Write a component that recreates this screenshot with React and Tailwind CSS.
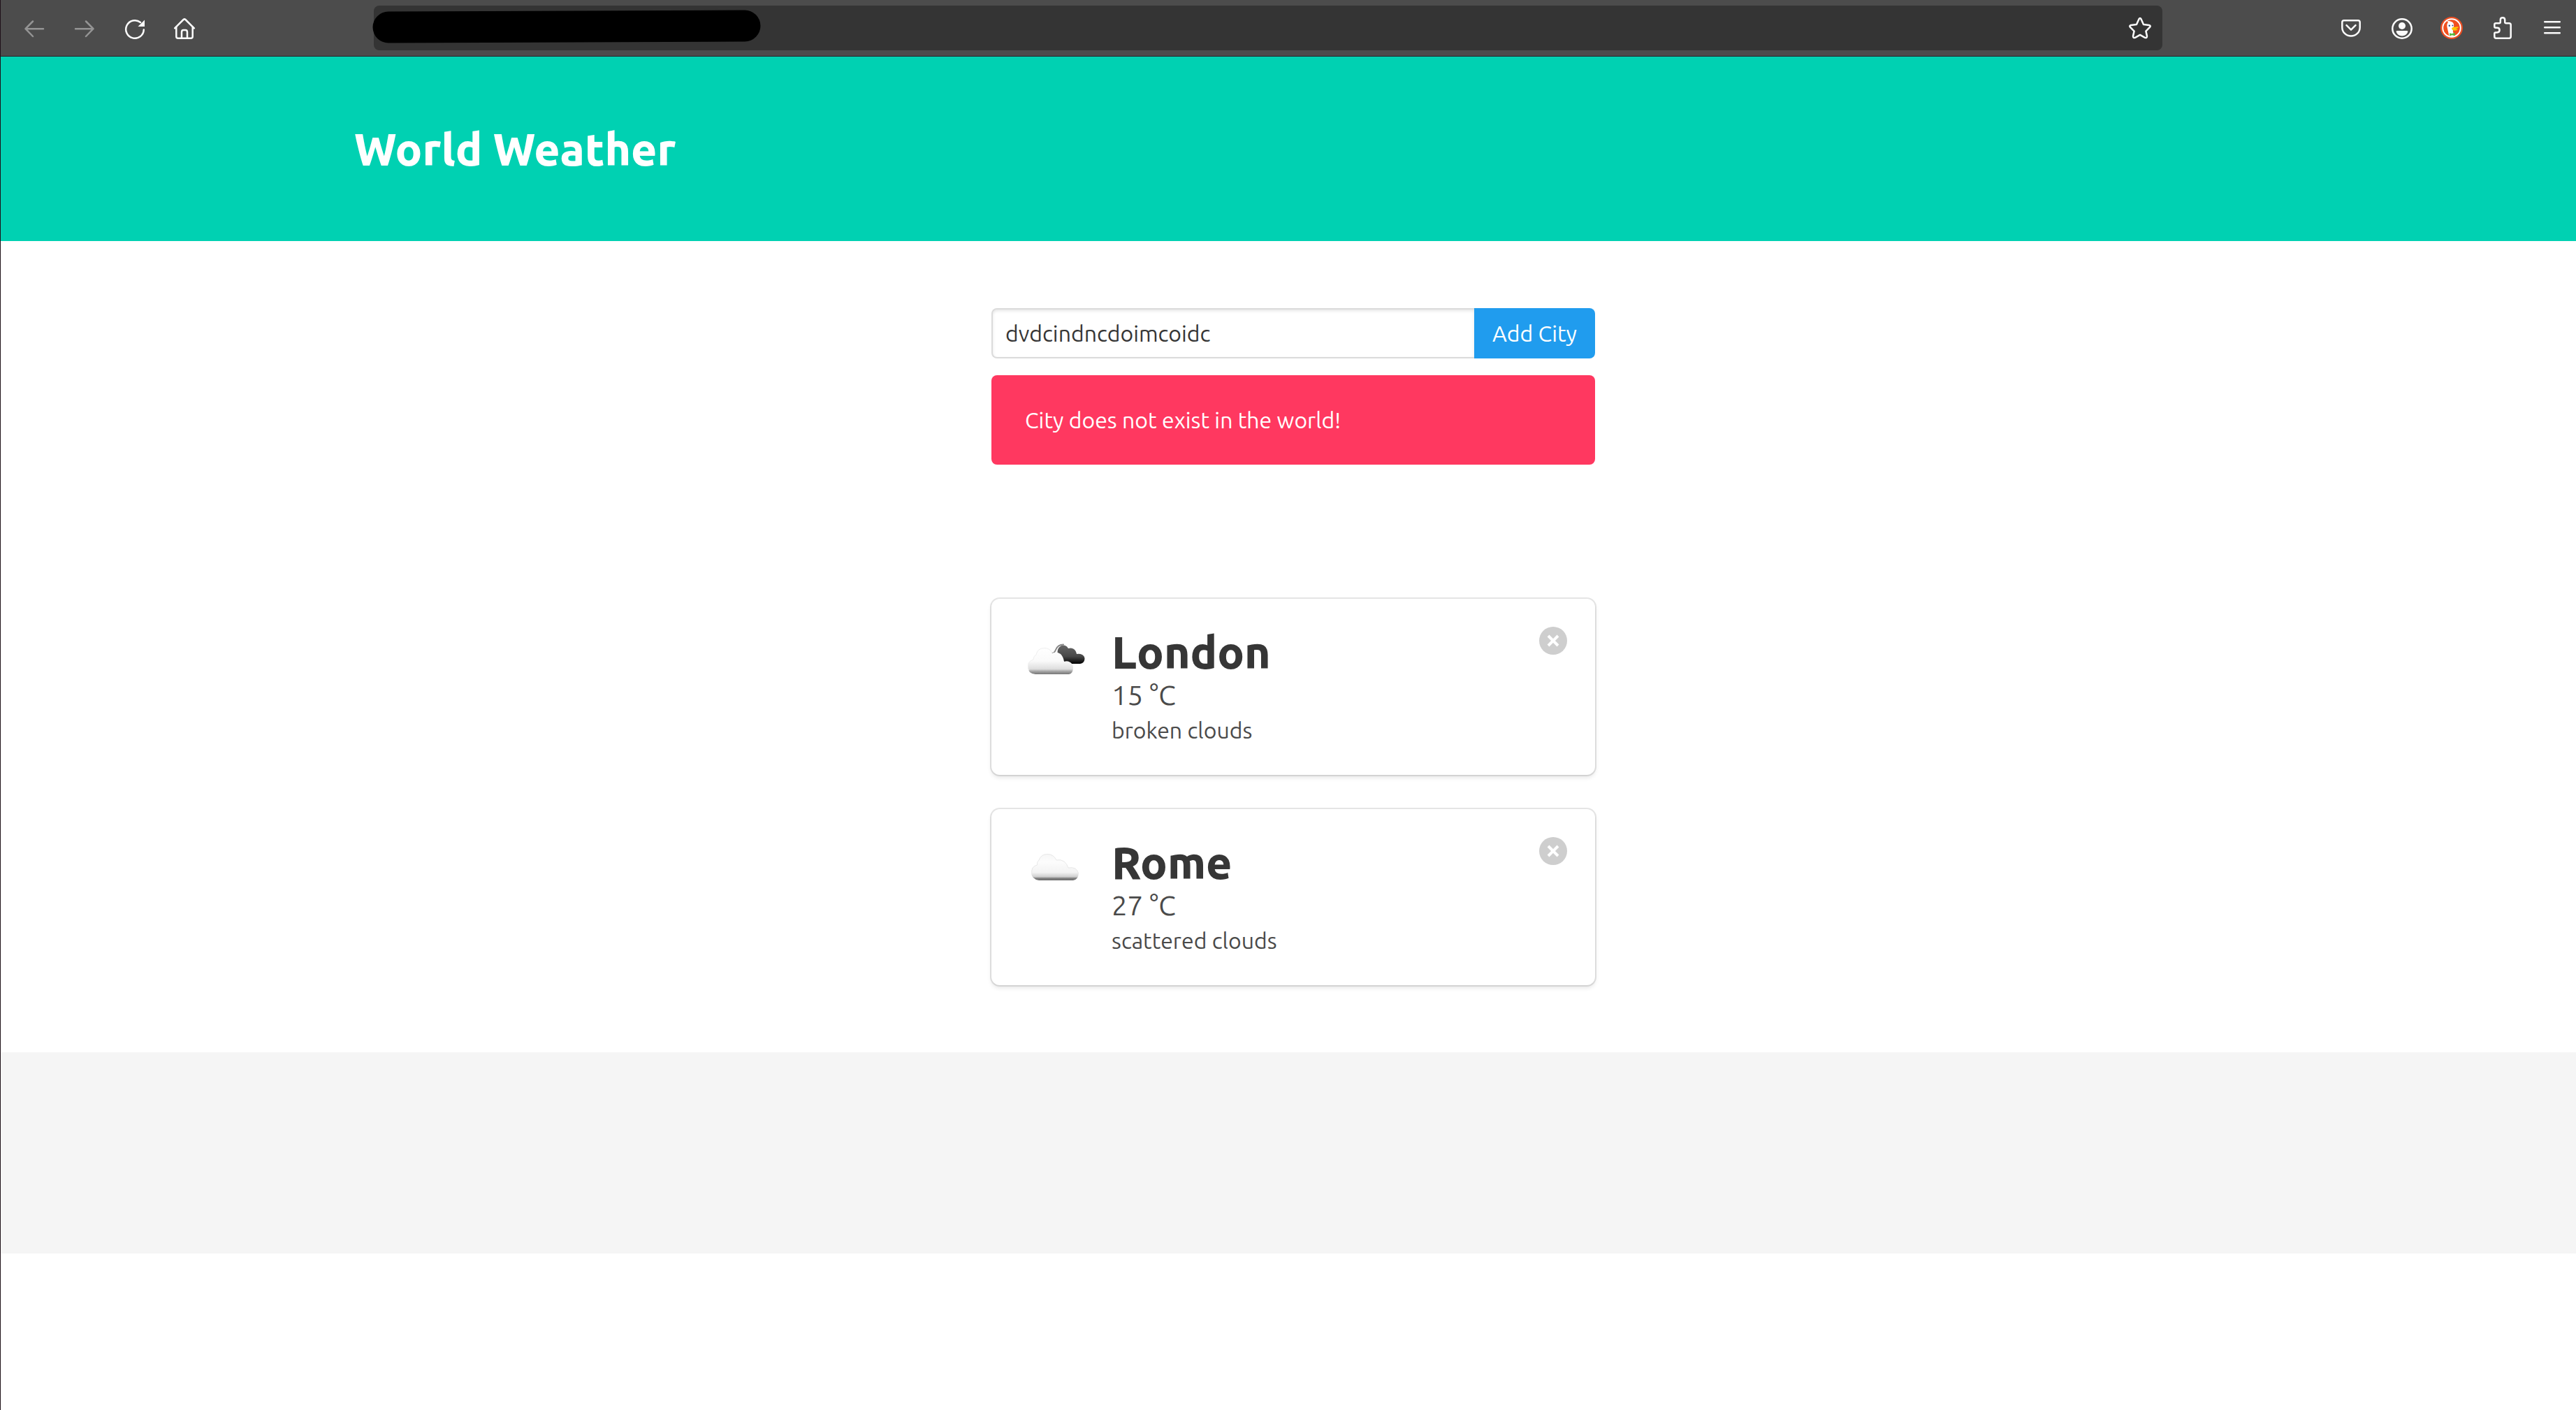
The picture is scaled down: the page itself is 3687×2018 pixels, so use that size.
const iconClass = "block h-8 w-8";

function Icon({ children }) {
  return (
    <svg
      viewBox="0 0 32 32"
      className={iconClass}
      fill="none"
      stroke="currentColor"
      strokeWidth="2.5"
      strokeLinecap="round"
      strokeLinejoin="round"
      aria-hidden="true"
    >
      {children}
    </svg>
  );
}

function ToolbarButton({ label, disabled, children }) {
  return (
    <button
      type="button"
      aria-label={label}
      disabled={disabled}
      className="text-[#fbfbfb] disabled:text-[#949494]"
    >
      <Icon>{children}</Icon>
    </button>
  );
}

function BrowserBar() {
  return (
    <div className="flex h-20 items-center bg-[#4c4c4c] pr-[18px] pl-8">
      <div className="flex gap-10">
        <ToolbarButton label="Back" disabled>
          <path d="M29 17.2H3.5M14 6.5L3.5 17.2L14 28" />
        </ToolbarButton>
        <ToolbarButton label="Forward" disabled>
          <path d="M3 17.2H28.5M18 6.5L28.5 17.2L18 28" />
        </ToolbarButton>
        <ToolbarButton label="Reload">
          <path d="M28.8 18.5A12.8 12.8 0 1 1 24 8" />
          <path d="M30 4.5V14H20.5Z" fill="currentColor" stroke="none" />
        </ToolbarButton>
        <ToolbarButton label="Home">
          <path d="M1.2 16.4L13.6 4Q15 2.8 16.4 4L28.8 16.4" />
          <path d="M3.3 14.6V28.2Q3.3 30.7 5.8 30.7H24.2Q26.7 30.7 26.7 28.2V14.6" />
          <path d="M11 30.5V22Q11 19 13.5 19H16.5Q19 19 19 22V30.5" />
        </ToolbarButton>
      </div>

      <div className="relative mx-[254px] flex h-16 flex-1 items-center rounded-lg bg-[#343434] pr-4">
        <input
          type="text"
          aria-label="Address"
          className="h-full min-w-0 flex-1 bg-transparent text-[32px] text-white outline-none"
        />
        <svg
          viewBox="0 0 560 64"
          className="absolute top-0 -left-0.5 h-16 w-[560px]"
          aria-hidden="true"
        >
          <line x1="23" y1="31" x2="533" y2="29" stroke="#000" strokeWidth="45" strokeLinecap="round" />
        </svg>
        <ToolbarButton label="Bookmark this page">
          <path d="M14.4 3.4Q16 .6 17.6 3.4L21 11L28.8 12Q32 12.8 29.8 15.2L24.4 20.6L26 27.6Q26 31 23 29.8L16 25.9L9 29.8Q6 31 6 27.6L7.6 20.6L2.2 15.2Q0 12.8 3.2 12L11 11Z" />
        </ToolbarButton>
      </div>

      <div className="flex gap-10">
        <ToolbarButton label="Save to Pocket">
          <path d="M6 5.3H26Q28.7 5.3 28.7 8V15.2A12.7 12.4 0 0 1 3.3 15.2V8Q3.3 5.3 6 5.3Z" />
          <path d="M9.5 12.2L16 18.6L22.5 12.2" />
        </ToolbarButton>
        <ToolbarButton label="Account">
          <circle cx="17" cy="17" r="13.7" />
          <circle cx="17" cy="13" r="5" fill="currentColor" stroke="none" />
          <path d="M10 20H24Q25.8 20 25.3 21.8A8.9 8.9 0 0 1 8.7 21.8Q8.2 20 10 20Z" fill="currentColor" stroke="none" />
        </ToolbarButton>
        <ToolbarButton label="DuckDuckGo">
          <g stroke="none">
            <circle cx="16" cy="16" r="16" fill="#e94e23" />
            <circle cx="16" cy="16" r="13.7" fill="#fff" />
            <circle cx="16" cy="16" r="11.8" fill="#f0501f" />
            <path d="M9.5 6.6Q11 5.6 13.3 6.2Q18 7.2 19 10.5Q19.6 13 18.6 16.4L17.8 20.5L19.5 27.2Q15.8 28.4 12.4 27.1L10 17Q8.2 10.5 11 8.3Z" fill="#fff" />
            <circle cx="12.8" cy="12.7" r="1.2" fill="#2d4f8e" />
            <circle cx="17.4" cy="12.5" r="1" fill="#2d4f8e" />
            <path d="M16.2 16.3Q18 14 21 14.7Q25 13.8 26 15.1Q24.5 16.8 21.6 17.2Q24.6 17.4 24.8 18.6Q21.5 20.6 18 19.3Q15.6 18.2 16.2 16.3Z" fill="#fdc400" />
            <path d="M13 23.2L16.2 24.2L20.6 23L20.8 27.2L16.6 26.2L13.2 27.3Z" fill="#4cba3c" />
          </g>
        </ToolbarButton>
        <ToolbarButton label="Extensions">
          <path d="M7.3 9.3H12Q13.8 9.3 13.8 7.5V4.5Q13.8 1.3 17 1.3Q20.2 1.3 20.2 4.5V7.5Q20.2 9.3 22 9.3H26.2Q28.7 9.3 28.7 11.8V28.2Q28.7 30.7 26.2 30.7H7.8Q5.3 30.7 5.3 28.2V24Q5.3 22.4 7 22.4H9Q12.6 22.4 12.6 19Q12.6 15.8 9 15.8H7Q5.3 15.8 5.3 14V11.3Q5.3 9.3 7.3 9.3Z" />
        </ToolbarButton>
        <ToolbarButton label="Menu">
          <path d="M5.2 7.2H26.8M5.2 15.3H26.8M5.2 23.3H26.8" />
        </ToolbarButton>
      </div>
    </div>
  );
}

function BrokenClouds() {
  return (
    <svg viewBox="0 0 100 100" className="block h-[100px] w-[100px]" role="img" aria-label="broken clouds">
      <defs>
        <linearGradient id="darkCloud" x1="0" y1="0" x2="0" y2="1">
          <stop offset="0" stopColor="#666" />
          <stop offset="0.6" stopColor="#484848" />
          <stop offset="0.85" stopColor="#1c1c1c" />
          <stop offset="1" stopColor="#000" />
        </linearGradient>
        <linearGradient id="brokenLight" x1="0" y1="0" x2="0" y2="1">
          <stop offset="0" stopColor="#ffffff" />
          <stop offset="0.5" stopColor="#fafafa" />
          <stop offset="0.8" stopColor="#dedede" />
          <stop offset="0.9" stopColor="#a0a0a0" />
          <stop offset="1" stopColor="#777" />
        </linearGradient>
      </defs>
      <path
        d="M47 38Q50 38 52 33Q55 25.500 63 25.500"
        fill="none"
        stroke="#888"
        strokeWidth="2"
        strokeLinecap="round"
      />
      <path
        d="M55 33Q57 27 63 26.500Q68 26.500 70 31Q75 29.500 78 32Q81 34 82 39Q86 38 90 40Q93.500 42 93.500 46Q93 52 87 53H70Q52 45 55 33Z"
        fill="url(#darkCloud)"
      />
      <path
        d="M23 68Q12 67 12 57Q12 49 20 47Q20 42 24 40Q26 30 36 30Q43 30 47 38Q53 35 59 39Q63 43 64 50Q69 48 73 51Q77 54 77 58Q77 67 71 68Z"
        fill="url(#brokenLight)"
      />
      <path
        d="M14 62Q12 60 12.500 56Q12.500 49 20 47Q20 42 24 40Q26 30.500 36 30.500Q43 30.500 47 37"
        fill="none"
        stroke="#efefef"
      />
    </svg>
  );
}

function ScatteredClouds() {
  return (
    <svg viewBox="0 0 100 100" className="block h-[100px] w-[100px]" role="img" aria-label="scattered clouds">
      <defs>
        <linearGradient id="scatteredLight" x1="0" y1="0" x2="0" y2="1">
          <stop offset="0" stopColor="#f6f6f6" />
          <stop offset="0.3" stopColor="#fcfcfc" />
          <stop offset="0.7" stopColor="#f3f3f3" />
          <stop offset="0.86" stopColor="#d0d0d0" />
          <stop offset="0.93" stopColor="#7c7c7c" />
          <stop offset="1" stopColor="#707070" />
        </linearGradient>
      </defs>
      <path
        d="M28 62Q17 60 17 50Q17 42 25 40Q25 35 28 33Q31 24 40 24Q49 24 53 33Q59 31 64 35Q68 38 70 44Q76 43 80 45Q84 48 85 52Q84 61 77 62Z"
        fill="url(#scatteredLight)"
      />
      <path
        d="M18 54Q16 42 25.500 40Q25 35 28 33Q31 24.500 40 24.500Q49 24.500 53 33Q59 31.500 64 35Q68 38 70 44Q76 43 80 45Q84 48 84.500 52"
        fill="none"
        stroke="#e8e8e8"
      />
    </svg>
  );
}

const cities = [
  { name: "London", temperature: "15 °C", description: "broken clouds", Picture: BrokenClouds },
  { name: "Rome", temperature: "27 °C", description: "scattered clouds", Picture: ScatteredClouds },
];

function CityCard({ name, temperature, description, Picture }) {
  return (
    <article className="flex items-start rounded-xl bg-white p-10 shadow-[0_4px_6px_rgba(10,10,10,0.1),0_0_0_2px_rgba(10,10,10,0.1)]">
      <Picture />
      <div className="ml-8 flex-1 text-[#4a4a4a]">
        <h2 className="text-[64px] leading-[72px] font-extrabold text-[#363636]">{name}</h2>
        <p className="text-[40px] leading-[52px]">{temperature}</p>
        <p className="text-[32px] leading-[48px]">{description}</p>
      </div>
      <button
        type="button"
        aria-label={`Remove ${name}`}
        className="flex h-10 w-10 items-center justify-center rounded-full bg-[#cecece] text-white"
      >
        <svg viewBox="0 0 20 20" className="block h-5 w-5" stroke="currentColor" strokeWidth="4" aria-hidden="true">
          <path d="M3 3L17 17M17 3L3 17" />
        </svg>
      </button>
    </article>
  );
}

export default function App() {
  return (
    <div className="min-h-screen border-l border-[#1f1119] bg-white font-['Ubuntu','Noto_Sans',sans-serif] text-[32px] leading-[48px] font-[450]">
      <BrowserBar />

      <header className="border-t border-[#2b1f26] bg-[#00d1b2] py-24 pl-[14px]">
        <div className="mx-auto max-w-[2688px]">
          <h1 className="text-[64px] leading-[72px] font-extrabold text-white">World Weather</h1>
        </div>
      </header>

      <main className="pl-[14px]">
        <section className="py-24">
          <div className="mx-auto max-w-[864px]">
            <form className="flex" onSubmit={(event) => event.preventDefault()}>
              <input
                type="text"
                aria-label="City"
                defaultValue="dvdcindncdoimcoidc"
                className="h-[72px] min-w-0 flex-1 rounded-l-lg border-2 border-r-0 border-[#dbdbdb] bg-white px-[18px] text-[#363636] shadow-[inset_0_2px_4px_rgba(10,10,10,0.1)] outline-none"
              />
              <button type="submit" className="h-[72px] rounded-r-lg bg-[#209cee] px-[26px] text-white">
                Add City
              </button>
            </form>
            <div role="alert" className="mt-6 rounded-lg bg-[#ff3860] px-12 py-10 text-white">
              City does not exist in the world!
            </div>
          </div>
        </section>

        <section className="py-24">
          <div className="mx-auto flex max-w-[864px] flex-col gap-[49px]">
            {cities.map((city) => (
              <CityCard key={city.name} {...city} />
            ))}
          </div>
        </section>
      </main>

      <footer className="h-72 bg-[#f5f5f5]" />
    </div>
  );
}
